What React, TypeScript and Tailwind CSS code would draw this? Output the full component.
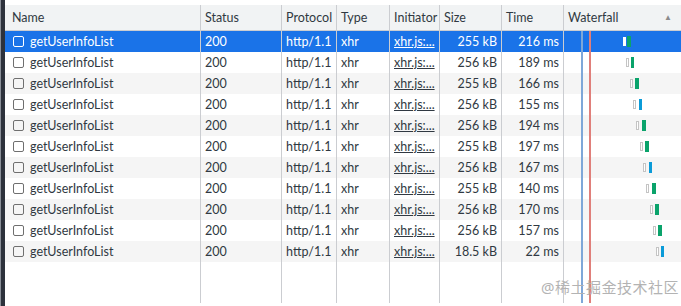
import React from 'react';

type Req = {
  size: string;
  time: string;
  queue: number; // left of the hollow queued box, px from waterfall cell
  bar: number; // left of the coloured bar
  barW: number;
  blue?: boolean;
};

const rows: Req[] = [
  { size: '255 kB', time: '216 ms', queue: 59, bar: 63, barW: 4 },
  { size: '256 kB', time: '189 ms', queue: 62, bar: 67, barW: 3 },
  { size: '255 kB', time: '166 ms', queue: 66, bar: 71, barW: 4 },
  { size: '256 kB', time: '155 ms', queue: 69, bar: 75, barW: 3, blue: true },
  { size: '256 kB', time: '194 ms', queue: 72, bar: 78, barW: 4 },
  { size: '255 kB', time: '197 ms', queue: 76, bar: 81, barW: 4 },
  { size: '256 kB', time: '167 ms', queue: 79, bar: 85, barW: 3, blue: true },
  { size: '255 kB', time: '140 ms', queue: 82, bar: 88, barW: 4 },
  { size: '256 kB', time: '170 ms', queue: 86, bar: 91, barW: 4 },
  { size: '256 kB', time: '157 ms', queue: 89, bar: 94, barW: 4 },
  { size: '18.5 kB', time: '22 ms', queue: 92, bar: 97, barW: 3, blue: true },
];

const cols = 'grid grid-cols-[195px_81px_55px_53px_50px_62px_62px_1fr]';
const cell = 'border-l border-[#cbcdd1] pl-[4px] pr-[2px] whitespace-nowrap overflow-hidden';

const Checkbox = ({ selected }: { selected: boolean }) => (
  <span
    className={`inline-block w-[11px] h-[11px] rounded-[2px] border ${
      selected ? 'border-white' : 'border-[#6f6f6f]'
    } mr-[6px] shrink-0`}
  />
);

export default function App() {
  return (
    <div
      className="w-[681px] h-[306px] bg-white flex text-[12.5px] text-[#303942] overflow-hidden"
      style={{ fontFamily: 'Lato, "Noto Sans", sans-serif' }}
    >
      {/* dark gutter on the left */}
      <div className="w-[5px] h-full bg-[#2d323c] border-l border-[#8a8f98]" />

      <div className="flex-1 flex flex-col pt-[5px] pb-[3px] relative">
        {/* header */}
        <div className={`${cols} h-[26px] bg-[#f1f3f4] border-b border-[#cbcdd1] items-center leading-[25px]`}>
          <div className="pl-[7px]">Name</div>
          <div className={cell}>Status</div>
          <div className={cell}>Protocol</div>
          <div className={cell}>Type</div>
          <div className={cell}>Initiator</div>
          <div className={cell}>Size</div>
          <div className={cell}>Time</div>
          <div className={`${cell} flex items-center justify-between pr-[9px]`}>
            <span>Waterfall</span>
            <span className="text-[8px] text-[#8b8b8b]">▲</span>
          </div>
        </div>

        {/* rows */}
        {rows.map((r, i) => {
          const selected = i === 0;
          const bg = selected ? 'bg-[#1a73e8] text-white' : i % 2 === 1 ? 'bg-white' : 'bg-[#f5f5f5]';
          return (
            <div key={i} className={`${cols} h-[21px] leading-[21px] ${bg}`}>
              <div className="pl-[8px] flex items-center">
                <Checkbox selected={selected} />
                <span>getUserInfoList</span>
              </div>
              <div className={cell}>200</div>
              <div className={cell}>http/1.1</div>
              <div className={cell}>xhr</div>
              <div className={`${cell} underline`}>xhr.js:...</div>
              <div className={`${cell} text-right pr-[4px]`}>{r.size}</div>
              <div className={`${cell} text-right pr-[4px]`}>{r.time}</div>
              <div className="border-l border-[#cbcdd1] relative">
                <span
                  className={`absolute top-[6px] h-[9px] w-[3px] border ${
                    selected ? 'bg-white border-white' : 'border-[#c4c4c4] bg-white'
                  }`}
                  style={{ left: r.queue }}
                />
                <span
                  className={`absolute top-[5px] h-[11px] ${r.blue ? 'bg-[#0b9bd8]' : 'bg-[#0aa36b]'}`}
                  style={{ left: r.bar, width: r.barW }}
                />
              </div>
            </div>
          );
        })}

        {/* empty area below the rows */}
        <div className={`${cols} flex-1`}>
          <div />
          <div className="border-l border-[#cbcdd1]" />
          <div className="border-l border-[#cbcdd1]" />
          <div className="border-l border-[#cbcdd1]" />
          <div className="border-l border-[#cbcdd1]" />
          <div className="border-l border-[#cbcdd1]" />
          <div className="border-l border-[#cbcdd1]" />
          <div className="border-l border-[#cbcdd1]" />
        </div>

        {/* DOMContentLoaded / load markers over the waterfall */}
        <div className="absolute top-[31px] bottom-[3px] left-[576px] w-[2px] bg-[#7ea7d8]" />
        <div className="absolute top-[31px] bottom-[3px] left-[584px] w-[2px] bg-[#e07f7a]" />

        {/* watermark */}
        <div
          className="absolute left-[536px] top-[276px] text-[15px] text-[#b3b3b3] tracking-[0.5px]"
          style={{ fontFamily: '"Noto Sans", "Noto Sans CJK SC", sans-serif' }}
        >
          @稀土掘金技术社区
        </div>
      </div>
    </div>
  );
}
